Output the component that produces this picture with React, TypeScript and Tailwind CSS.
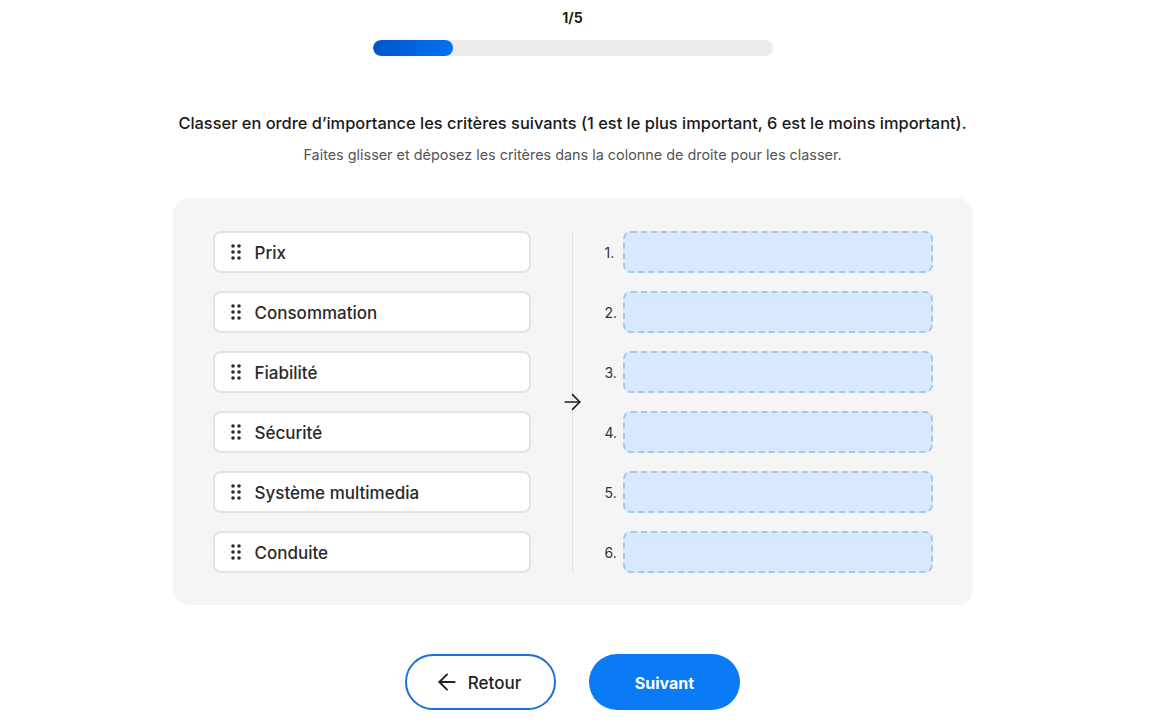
import React from "react";
import { ArrowLeft, ArrowRight } from "lucide-react";

const criteria = ["Prix", "Consommation", "Fiabilité", "Sécurité", "Système multimedia", "Conduite"];

function DragDots() {
  return (
    <svg width="10" height="16" viewBox="0 0 10 16" className="shrink-0 text-[#2b2b2b]">
      {[2, 8].map((x) =>
        [2, 8, 14].map((y) => <circle key={`${x}-${y}`} cx={x} cy={y} r="1.8" fill="currentColor" />)
      )}
    </svg>
  );
}

export default function App() {
  return (
    <div
      className="flex min-h-screen flex-col items-center bg-white pr-[14px] text-[#1f1f1f]"
      style={{ fontFamily: "Inter, 'Noto Sans', sans-serif" }}
    >
      {/* progress */}
      <div className="pt-[8px] text-[14px] font-bold leading-5 text-[#222]">1/5</div>
      <div className="mt-[12px] h-4 w-[400px] overflow-hidden rounded-full bg-[#ececec]">
        <div className="h-full w-[80px] rounded-full bg-gradient-to-r from-[#0057c9] to-[#0072f2]" />
      </div>

      {/* question */}
      <h1 className="mt-[55px] text-[16.4px] font-medium leading-6 text-[#1a1a1a]">
        Classer en ordre d’importance les critères suivants (1 est le plus important, 6 est le moins important).
      </h1>
      <p className="mt-[10px] text-[14.4px] leading-5 text-[#555]">
        Faites glisser et déposez les critères dans la colonne de droite pour les classer.
      </p>

      {/* ranking panel */}
      <div className="mt-[33px] flex w-[800px] rounded-2xl bg-[#f5f5f5] px-10 pb-[32px] pt-[33px]">
        <div className="flex w-[318px] flex-col gap-[18px]">
          {criteria.map((c) => (
            <div
              key={c}
              className="flex h-[42px] items-center gap-[14px] rounded-lg border-2 border-[#e3e3e3] bg-white pl-[16px] text-[17px] font-medium text-[#2a2a2a]"
            >
              <DragDots />
              <span className="pt-[3px]">{c}</span>
            </div>
          ))}
        </div>

        <div className="relative ml-[41px] flex flex-1 flex-col gap-[18px] border-l border-[#e2e2e2] pl-[32px]">
          <ArrowRight
            size={25}
            strokeWidth={1.6}
            className="absolute left-[-13px] top-1/2 -translate-y-1/2 text-[#1f1f1f]"
          />
          {criteria.map((_, i) => (
            <div key={i} className="flex h-[42px] items-center gap-[6px]">
              <span className="w-[12px] text-[14px] text-[#333]">{i + 1}.</span>
              <div className="h-full flex-1 rounded-lg border-2 border-dashed border-[#a9c8e8] bg-[#d8e9fd]" />
            </div>
          ))}
        </div>
      </div>

      {/* navigation */}
      <div className="mt-[49px] flex gap-[33px]">
        <button className="flex h-[56px] w-[151px] items-center justify-center gap-[8px] rounded-full border-2 border-[#1e6fd6] bg-white text-[17px] font-medium text-[#222]">
          <ArrowLeft size={26} strokeWidth={1.8} className="-ml-[6px]" />
          <span className="pt-[3px]">Retour</span>
        </button>
        <button className="flex h-[56px] w-[151px] items-center justify-center rounded-full bg-[#0a7bf4] pt-[2px] text-[16px] font-bold text-white">
          Suivant
        </button>
      </div>
    </div>
  );
}
